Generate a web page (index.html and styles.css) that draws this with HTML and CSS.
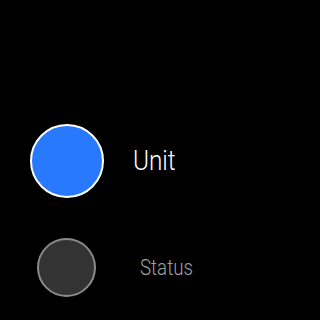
FILE: index.html
```html
<!DOCTYPE html>
<html>
<head>
<meta charset="utf-8">
<link rel="stylesheet" href="styles.css">
</head>
<body>
<div class="list">
  <div class="row row-active">
    <div class="dot dot-active"></div>
    <div class="label label-active">Unit</div>
  </div>
  <div class="row row-idle">
    <div class="dot dot-idle"></div>
    <div class="label label-idle">Status</div>
  </div>
</div>
</body>
</html>
```
FILE: styles.css
```css
html, body {
  margin: 0;
  padding: 0;
  background: #000;
  width: 320px;
  height: 320px;
  overflow: hidden;
  font-family: Roboto, "Noto Sans", sans-serif;
}
.list {
  display: flex;
  flex-direction: column;
}
.row {
  display: flex;
  align-items: center;
}
.row-active {
  margin-top: 124px;
  padding-left: 30px;
}
.row-idle {
  margin-top: 40px;
  padding-left: 37px;
}
.dot {
  box-sizing: border-box;
  border-radius: 50%;
  flex: none;
}
.dot-active {
  width: 74px;
  height: 74px;
  background: #2979ff;
  border: 2px solid #fff;
}
.dot-idle {
  width: 59px;
  height: 59px;
  background: #333;
  border: 2px solid #8a8a8a;
}
.label {
  transform-origin: left center;
  white-space: nowrap;
}
.label-active {
  margin-left: 29px;
  color: #fff;
  font-size: 27px;
  font-weight: 300;
  transform: scaleX(0.9);
}
.label-idle {
  margin-left: 44px;
  color: #a0a0a0;
  font-size: 21.5px;
  font-weight: 300;
  transform: scaleX(0.87);
}
```
